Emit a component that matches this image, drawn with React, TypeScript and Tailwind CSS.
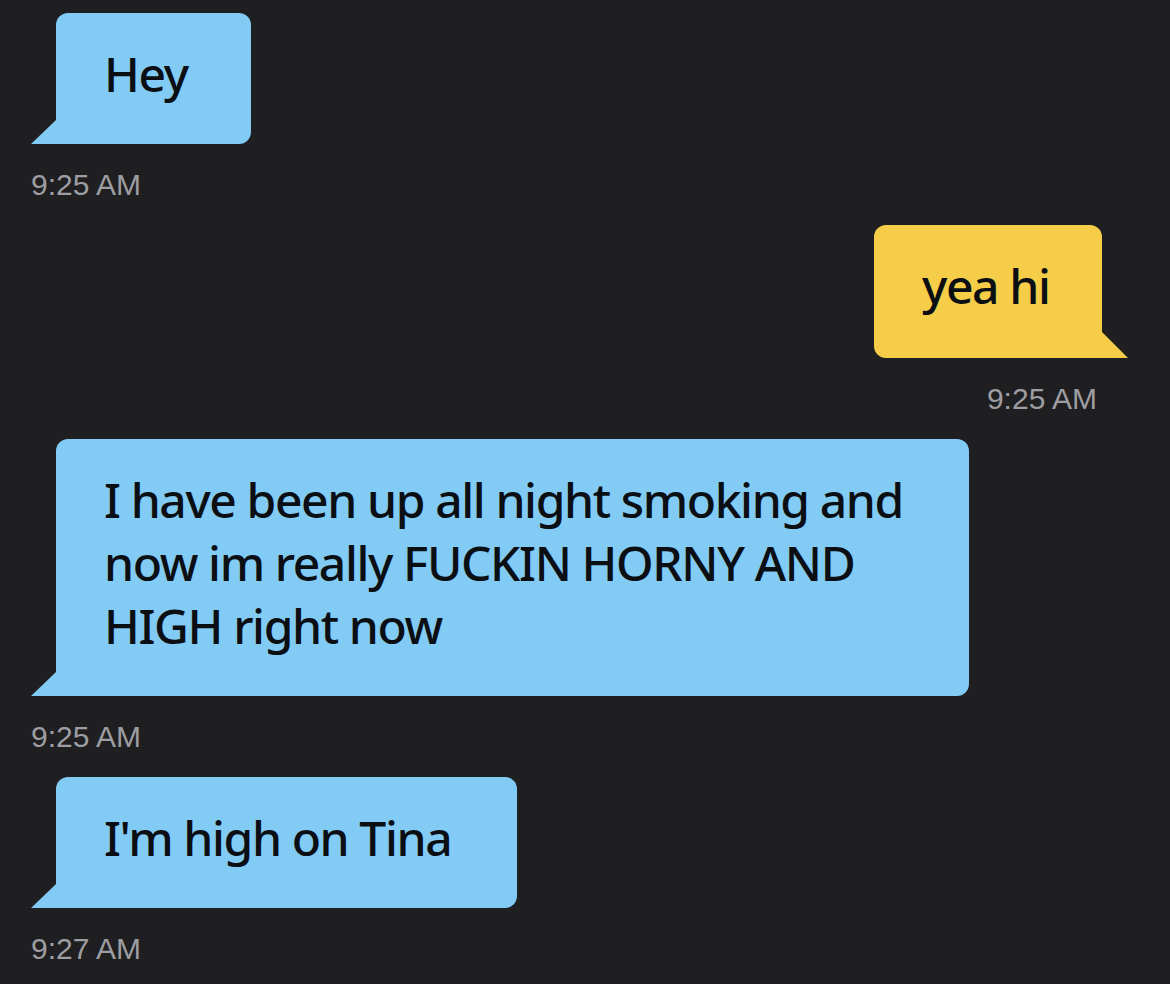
import type { ReactNode } from "react";

const bubbleFont = { fontFamily: '"Noto Sans", "Open Sans", sans-serif' };

function Tail({ side, color }: { side: "left" | "right"; color: string }) {
  return side === "left" ? (
    <svg width="25" height="24" viewBox="0 0 25 24" className="block shrink-0">
      <path d="M25 0 L25 24 L0 24 Z" fill={color} />
    </svg>
  ) : (
    <svg width="26" height="26" viewBox="0 0 26 26" className="block shrink-0">
      <path d="M0 0 L0 26 L26 26 Z" fill={color} />
    </svg>
  );
}

function Incoming({ width, time, children }: { width: string; time: string; children: ReactNode }) {
  return (
    <div className="flex flex-col items-start">
      <div className="flex items-end">
        <Tail side="left" color="#82cbf5" />
        <div
          className={`${width} bg-[#82cbf5] rounded-[12px] rounded-bl-none pl-[48px] pt-[29px] pb-[39px] text-[48px] leading-[63px] tracking-[-1.4px] font-medium text-[#0b0f14]`}
          style={bubbleFont}
        >
          {children}
        </div>
      </div>
      <div className="mt-[24px] text-[30px] leading-[34px] text-[#9d9da2] font-['Liberation_Sans',sans-serif]">
        {time}
      </div>
    </div>
  );
}

function Outgoing({ width, time, children }: { width: string; time: string; children: ReactNode }) {
  return (
    <div className="flex flex-col items-end">
      <div className="flex items-end">
        <div
          className={`${width} bg-[#f5cd48] rounded-[12px] rounded-br-none pl-[48px] pt-[29px] pb-[41px] text-[48px] leading-[63px] tracking-[-1.4px] font-medium text-[#0b0f14]`}
          style={bubbleFont}
        >
          {children}
        </div>
        <Tail side="right" color="#f5cd48" />
      </div>
      <div className="mt-[24px] mr-[31px] text-[30px] leading-[34px] text-[#9d9da2] font-['Liberation_Sans',sans-serif]">
        {time}
      </div>
    </div>
  );
}

export default function App() {
  return (
    <div className="w-[1170px] h-[984px] bg-[#1f1f21] pt-[13px] pl-[31px] pr-[42px] flex flex-col gap-[23px] overflow-hidden">
      <Incoming width="w-[195px]" time="9:25 AM">
        Hey
      </Incoming>
      <Outgoing width="w-[228px]" time="9:25 AM">
        yea hi
      </Outgoing>
      <Incoming width="w-[913px]" time="9:25 AM">
        I have been up all night smoking and now im really FUCKIN HORNY AND HIGH right now
      </Incoming>
      <Incoming width="w-[461px]" time="9:27 AM">
        I'm high on Tina
      </Incoming>
    </div>
  );
}
